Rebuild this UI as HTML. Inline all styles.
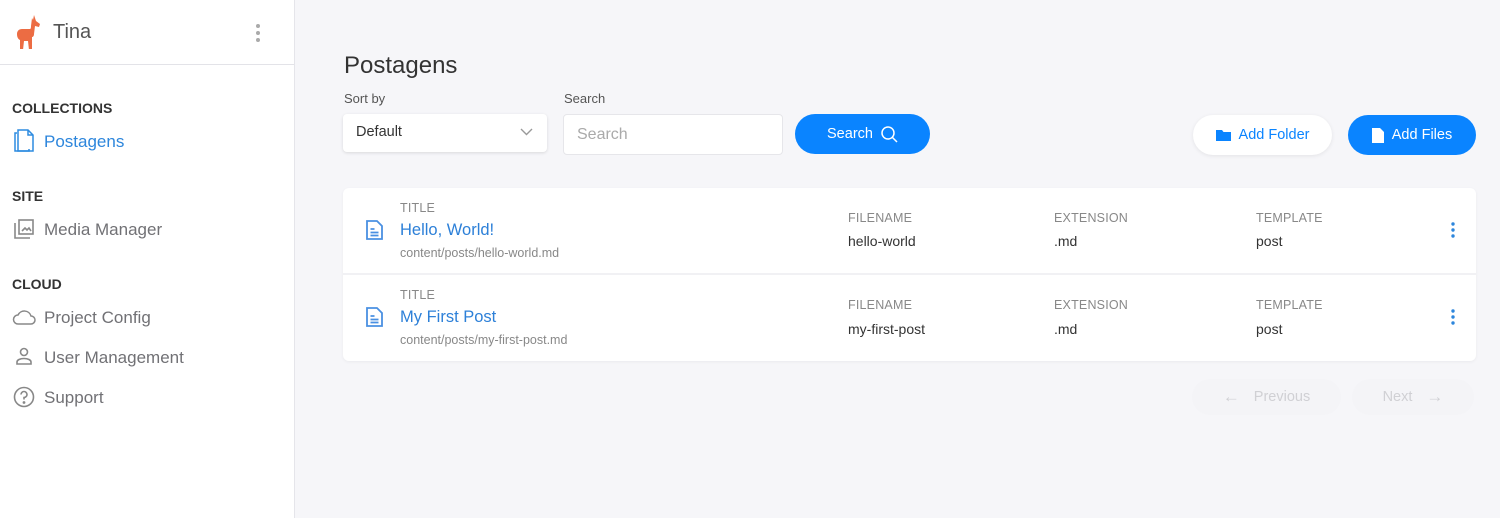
<!DOCTYPE html>
<html><head><meta charset="utf-8"><style>
*{box-sizing:border-box;margin:0;padding:0}
body{width:1500px;height:518px;overflow:hidden;font-family:"Liberation Sans",sans-serif;background:#f6f6f9;position:relative}
.side{position:absolute;left:0;top:0;width:295px;height:518px;background:#fff;border-right:1px solid #e5e5ea}
.hdr{height:65px;border-bottom:1px solid #e3e3e8;position:relative}
.abs{position:absolute;white-space:nowrap}
.sec{font-size:14px;font-weight:bold;color:#333;left:12px}
.item{left:44px;font-size:17px;color:#717175}
.lbl{font-size:12.5px;color:#888;letter-spacing:.2px}
.val{font-size:14px;color:#333}
.btn{position:absolute;border-radius:21px;font-size:14.5px;display:flex;align-items:center;justify-content:center;gap:8px}
</style></head><body>
<div class="side">
 <div class="hdr">
  <svg class="abs" style="left:15px;top:15px" width="26" height="34" viewBox="0 0 26 34"><path d="M17 3l1 2 1-5 2 6 4 3-1 3-4-1-1 8c0 2-1 3-2 3l0 13h-3l-1-9-4 0-1 9H5l0-10c-2-1-3-3-3-6 0-3 2-5 5-5h8c1 0 1-2 1-3z" fill="#ec6c43"/></svg>
  <div class="abs" style="left:53px;top:21px;font-size:20px;color:#555">Tina</div>
  <svg class="abs" style="left:255px;top:23px" width="6" height="20"><circle cx="3" cy="3" r="2" fill="#aaa"/><circle cx="3" cy="10" r="2" fill="#aaa"/><circle cx="3" cy="17" r="2" fill="#aaa"/></svg>
 </div>
 <div class="abs sec" style="top:100px">COLLECTIONS</div>
 <svg class="abs" style="left:12px;top:129px" width="24" height="24" viewBox="0 0 24 24" fill="none" stroke="#2d8be0" stroke-width="1.5"><path d="M5 4H3v18h14v-2"/><path d="M6 1h10l5 5v16H6z"/><path d="M16 1v5h5"/></svg>
 <div class="abs item" style="top:132px;color:#2d86dc">Postagens</div>
 <div class="abs sec" style="top:188px">SITE</div>
 <svg class="abs" style="left:13px;top:218px" width="22" height="22" viewBox="0 0 22 22" fill="none" stroke="#888" stroke-width="1.6"><path d="M2 5v15h15"/><rect x="6" y="2" width="14" height="14"/><path d="M9 13l3-3 2 2 2-2 2 3" /></svg>
 <div class="abs item" style="top:220px">Media Manager</div>
 <div class="abs sec" style="top:276px">CLOUD</div>
 <svg class="abs" style="left:12px;top:308px" width="24" height="18" viewBox="0 0 24 18" fill="none" stroke="#888" stroke-width="1.5"><path d="M6 16h13a4 4 0 0 0 0-8 7 7 0 0 0-13-1 4.5 4.5 0 0 0 0 9z"/></svg>
 <div class="abs item" style="top:308px">Project Config</div>
 <svg class="abs" style="left:16px;top:347px" width="16" height="18" viewBox="0 0 16 18" fill="none" stroke="#888" stroke-width="1.6"><circle cx="8" cy="5" r="3.5"/><path d="M1 17v-2c0-2 3-3.5 7-3.5s7 1.5 7 3.5v2z"/></svg>
 <div class="abs item" style="top:348px">User Management</div>
 <svg class="abs" style="left:13px;top:386px" width="22" height="22" viewBox="0 0 22 22" fill="none" stroke="#888" stroke-width="1.6"><circle cx="11" cy="11" r="9.5"/><path d="M8 8.5a3 3 0 1 1 3 3v2"/><circle cx="11" cy="16.5" r=".6" fill="#888"/></svg>
 <div class="abs item" style="top:388px">Support</div>
</div>

<div class="abs" style="left:344px;top:52px;font-size:24px;color:#333">Postagens</div>
<div class="abs" style="left:344px;top:91px;font-size:13px;color:#555">Sort by</div>
<div class="abs" style="left:564px;top:91px;font-size:13px;color:#555">Search</div>
<div class="abs" style="left:343px;top:114px;width:204px;height:38px;background:#fff;border-radius:4px;box-shadow:0 1px 3px rgba(0,0,0,.12)"></div>
<div class="abs" style="left:356px;top:124px;font-size:14.5px;color:#333">Default</div>
<svg class="abs" style="left:520px;top:128px" width="13" height="8"><path d="M1 1l5.5 5.5L12 1" fill="none" stroke="#999" stroke-width="1.4"/></svg>
<div class="abs" style="left:563px;top:114px;width:220px;height:41px;background:#fff;border:1px solid #e6e6ea;border-radius:4px"></div>
<div class="abs" style="left:577px;top:126px;font-size:16px;color:#aaa">Search</div>
<div class="btn" style="left:795px;top:114px;width:135px;height:40px;background:#0a84ff;color:#fff">Search <svg width="17" height="17" viewBox="0 0 17 17" fill="none" stroke="#fff" stroke-width="1.5"><circle cx="7" cy="7" r="6"/><path d="M11.5 11.5l4.5 4.5"/></svg></div>
<div class="btn" style="left:1193px;top:115px;width:139px;height:40px;background:#fff;color:#0a84ff;box-shadow:0 1px 4px rgba(0,0,0,.08)"><svg width="15" height="12" viewBox="0 0 15 12"><path d="M0 1h6l1.5 2H15v9H0z" fill="#0a84ff"/></svg>Add Folder</div>
<div class="btn" style="left:1348px;top:115px;width:128px;height:40px;background:#0a84ff;color:#fff"><svg width="12" height="15" viewBox="0 0 12 15"><path d="M0 0h8l4 4v11H0z" fill="#fff"/></svg>Add Files</div>

<div class="abs" style="left:343px;top:188px;width:1133px;height:173px;background:#fff;border-radius:6px;box-shadow:0 1px 3px rgba(0,0,0,.05)"></div>
<div class="abs" style="left:343px;top:273px;width:1133px;height:2px;background:#f1f1f4"></div>

<svg class="abs" style="left:366px;top:220px" width="17" height="20" viewBox="0 0 17 20" fill="none" stroke="#4a90e2" stroke-width="1.8"><path d="M1 1h10l5 5v13H1z"/><path d="M4.5 9h4M4.5 12.5h8M4.5 15.5h8"/></svg>
<div class="abs lbl" style="left:400px;top:201px">TITLE</div>
<div class="abs" style="left:400px;top:221px;font-size:16.5px;color:#2d80d8">Hello, World!</div>
<div class="abs" style="left:400px;top:246px;font-size:12.5px;color:#888">content/posts/hello-world.md</div>
<div class="abs lbl" style="left:848px;top:211px">FILENAME</div><div class="abs val" style="left:848px;top:233px">hello-world</div>
<div class="abs lbl" style="left:1054px;top:211px">EXTENSION</div><div class="abs val" style="left:1054px;top:233px">.md</div>
<div class="abs lbl" style="left:1256px;top:211px">TEMPLATE</div><div class="abs val" style="left:1256px;top:233px">post</div>
<svg class="abs" style="left:1450px;top:222px" width="6" height="16"><circle cx="3" cy="2" r="1.7" fill="#2d86dc"/><circle cx="3" cy="8" r="1.7" fill="#2d86dc"/><circle cx="3" cy="14" r="1.7" fill="#2d86dc"/></svg>
<svg class="abs" style="left:366px;top:307px" width="17" height="20" viewBox="0 0 17 20" fill="none" stroke="#4a90e2" stroke-width="1.8"><path d="M1 1h10l5 5v13H1z"/><path d="M4.5 9h4M4.5 12.5h8M4.5 15.5h8"/></svg>
<div class="abs lbl" style="left:400px;top:288px">TITLE</div>
<div class="abs" style="left:400px;top:308px;font-size:16.5px;color:#2d80d8">My First Post</div>
<div class="abs" style="left:400px;top:333px;font-size:12.5px;color:#888">content/posts/my-first-post.md</div>
<div class="abs lbl" style="left:848px;top:298px">FILENAME</div><div class="abs val" style="left:848px;top:321px">my-first-post</div>
<div class="abs lbl" style="left:1054px;top:298px">EXTENSION</div><div class="abs val" style="left:1054px;top:321px">.md</div>
<div class="abs lbl" style="left:1256px;top:298px">TEMPLATE</div><div class="abs val" style="left:1256px;top:321px">post</div>
<svg class="abs" style="left:1450px;top:309px" width="6" height="16"><circle cx="3" cy="2" r="1.7" fill="#2d86dc"/><circle cx="3" cy="8" r="1.7" fill="#2d86dc"/><circle cx="3" cy="14" r="1.7" fill="#2d86dc"/></svg>

<div class="btn" style="left:1192px;top:379px;width:149px;height:36px;background:#f4f4f7;color:#d0d0d4;gap:14px"><span style="font-size:17px">&larr;</span>Previous</div>
<div class="btn" style="left:1352px;top:379px;width:122px;height:36px;background:#f4f4f7;color:#d0d0d4;gap:14px">Next<span style="font-size:17px">&rarr;</span></div>
</body></html>
